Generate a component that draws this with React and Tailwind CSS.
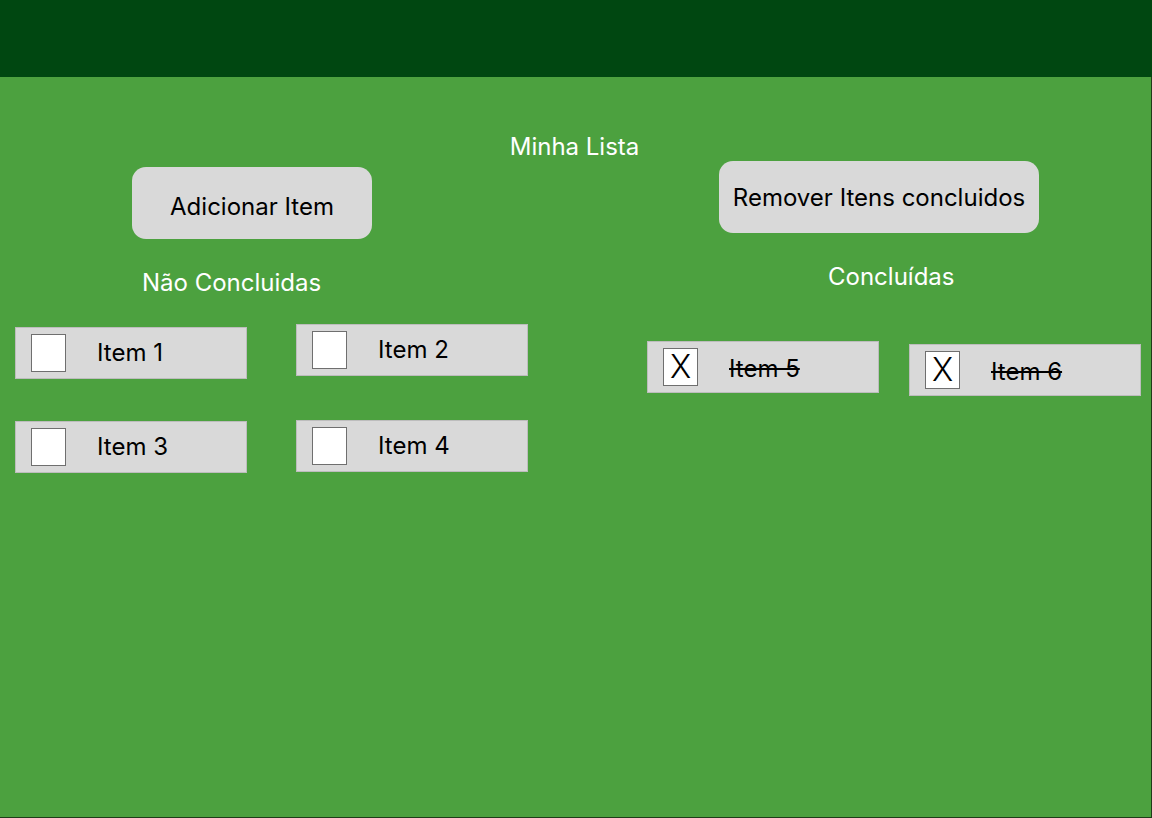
import React from 'react';

function Checkbox({ checked }) {
  return (
    <div className="w-[35px] h-[38px] shrink-0 bg-white border border-[#6f6f6f] flex items-center justify-center text-[32px] leading-none text-black font-light">
      {checked ? 'X' : null}
    </div>
  );
}

function Item({ label, done, className = '' }) {
  return (
    <div
      className={
        'w-[232px] h-[52px] bg-[#d9d9d9] border border-[#bdbdbd] flex items-center pl-[15px] ' +
        className
      }
    >
      <Checkbox checked={done} />
      <span
        className={
          'ml-[31px] text-[24px] leading-[24px] text-black ' + (done ? 'pt-[3px] line-through decoration-2' : '')
        }
      >
        {label}
      </span>
    </div>
  );
}

export default function App() {
  return (
    <div className="w-[1152px] h-[818px] flex flex-col font-['Inter',sans-serif]">
      {/* Top bar */}
      <div className="h-[77px] shrink-0 bg-[#004711]" />

      <div className="flex-1 bg-[#4ca13f] border-r border-b border-[#1f3d19]">
        <p className="pt-[58px] text-center text-white text-[24px] leading-[24px] pr-[2px]">Minha Lista</p>

        <div className="flex">
          {/* Não concluidas */}
          <div className="w-[600px] flex flex-col items-start">
            <button className="ml-[132px] mt-[8px] w-[240px] h-[72px] pt-[7px] rounded-[14px] bg-[#d9d9d9] text-[24px] text-black">
              Adicionar Item
            </button>
            <p className="ml-[142px] mt-[32px] text-white text-[24px] leading-[24px]">Não Concluidas</p>

            <div className="ml-[15px] mt-[29px] flex items-start gap-[49px]">
              <Item label="Item 1" className="mt-[3px]" />
              <Item label="Item 2" />
            </div>
            <div className="ml-[15px] mt-[41px] flex items-start gap-[49px]">
              <Item label="Item 3" className="mt-[1px]" />
              <Item label="Item 4" />
            </div>
          </div>

          {/* Concluídas */}
          <div className="flex-1 flex flex-col items-start">
            <button className="ml-[119px] mt-[2px] w-[320px] h-[72px] pt-[2px] rounded-[14px] bg-[#d9d9d9] text-[24px] text-black">
              Remover Itens concluidos
            </button>
            <p className="ml-[228px] mt-[32px] text-white text-[24px] leading-[24px]">Concluídas</p>

            <div className="ml-[47px] mt-[52px] flex items-start gap-[30px]">
              <Item label="Item 5" done />
              <Item label="Item 6" done className="mt-[3px]" />
            </div>
          </div>
        </div>
      </div>
    </div>
  );
}
